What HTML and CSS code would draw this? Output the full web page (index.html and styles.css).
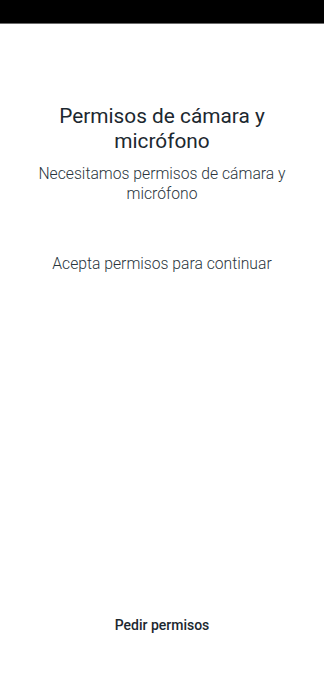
FILE: index.html
```html
<!DOCTYPE html>
<html lang="es">
<head>
<meta charset="utf-8">
<link rel="stylesheet" href="styles.css">
</head>
<body>
<div class="status-bar"></div>
<main class="screen">
  <section class="intro">
    <h1 class="title">Permisos de cámara y micrófono</h1>
    <p class="subtitle">Necesitamos permisos de cámara y micrófono</p>
  </section>
  <p class="notice">Acepta permisos para continuar</p>
  <div class="spacer"></div>
  <button class="action">Pedir permisos</button>
</main>
</body>
</html>
```
FILE: styles.css
```css
html, body {
  margin: 0;
  padding: 0;
  background: #ffffff;
}
body {
  font-family: Roboto, "Liberation Sans", sans-serif;
  color: #1c2830;
  width: 324px;
  height: 684px;
  display: flex;
  flex-direction: column;
}
.status-bar {
  height: 24px;
  background: #000000;
  border-bottom: 1px solid #6b6b6b;
  box-sizing: border-box;
}
.screen {
  flex: 1;
  display: flex;
  flex-direction: column;
  align-items: center;
  padding: 80px 16px 0;
}
.intro {
  display: flex;
  flex-direction: column;
  align-items: center;
  text-align: center;
}
.title {
  margin: 0;
  font-size: 20.8px;
  font-weight: 400;
  line-height: 25px;
  width: 230px;
  color: #1c2830;
}
.subtitle {
  margin: 10px 0 0;
  font-size: 15.7px;
  font-weight: 300;
  line-height: 20px;
  color: #2a353c;
  width: 270px;
}
.notice {
  margin: 50px 0 0;
  font-size: 15.7px;
  font-weight: 300;
  line-height: 20px;
  color: #2a353c;
}
.spacer {
  flex: 1;
}
.action {
  background: none;
  border: none;
  font-family: Roboto, "Liberation Sans", sans-serif;
  font-size: 14px;
  font-weight: 500;
  color: #1c2830;
  padding: 0;
  line-height: 20px;
  margin-bottom: 49px;
}
```
